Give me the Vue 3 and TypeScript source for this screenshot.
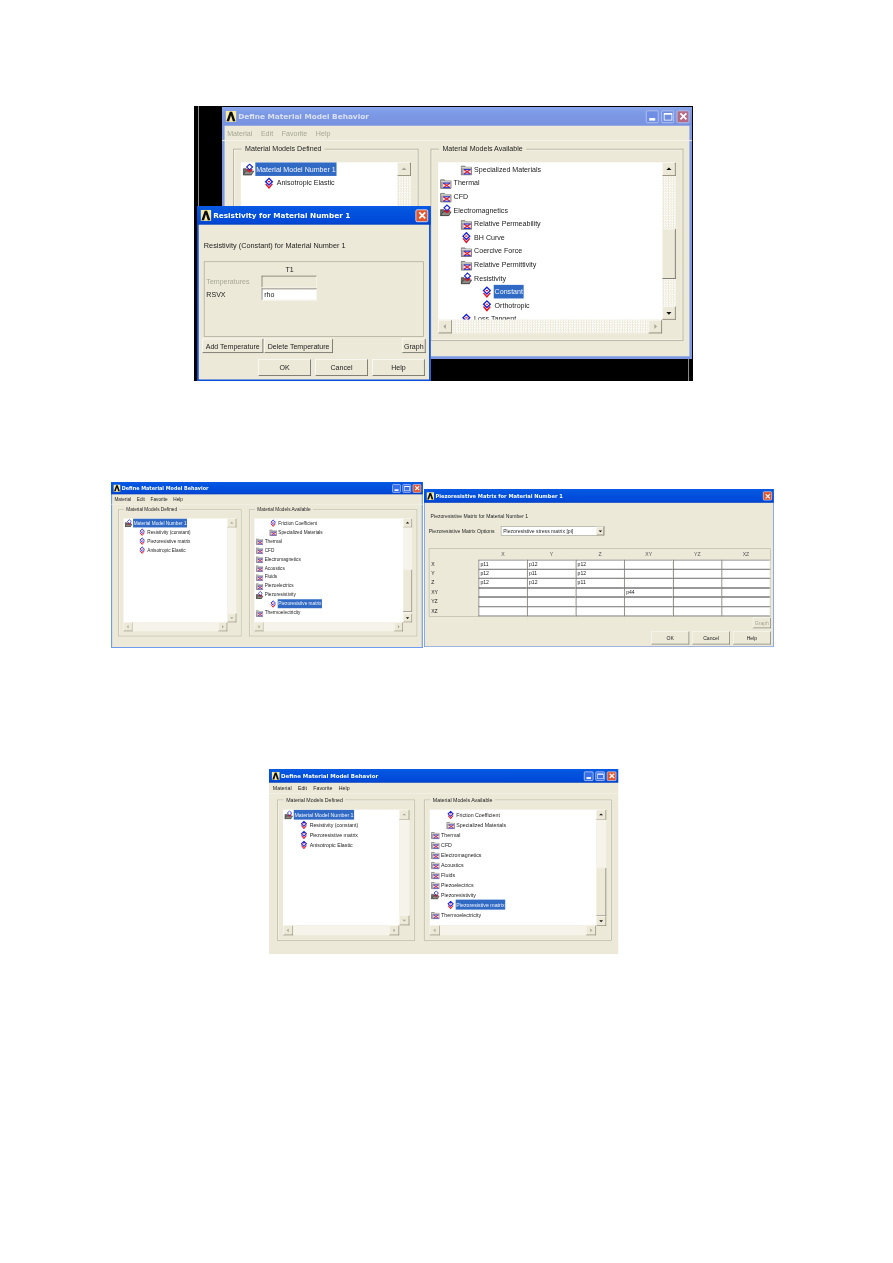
<template>
  <div class="page">
    <!-- shared icons -->
    <svg class="defs" width="0" height="0" aria-hidden="true">
      <symbol id="ico-leaf" viewBox="0 0 16 16">
        <path d="M8 1.500 12.500 6 8 10.500 3.500 6Z" fill="#fff" stroke="#1620d8" stroke-width="1.800" />
        <path d="M3.500 9 8 14.500 12.500 9" fill="none" stroke="#e81020" stroke-width="1.900" />
        <path d="M6.500 6h3" stroke="#e81020" stroke-width="1.500" />
      </symbol>
      <symbol id="ico-folder" viewBox="0 0 16 16">
        <path d="M1 3.500h5l1 1.500h8v10H1Z" fill="#a6a6a2" stroke="#66665f" />
        <path d="M1.500 5.500h13" stroke="#f4f4f0" />
        <rect x="4" y="7.500" width="10" height="7" fill="#dfe3f6" />
        <path d="M4.500 8l9 6M13.500 8l-9 6" stroke="#e81c28" stroke-width="1.500" />
        <path d="M4.500 8h9M4.500 14h9" stroke="#1c2ad0" stroke-width="1.300" />
      </symbol>
      <symbol id="ico-open" viewBox="0 0 16 16">
        <path d="M1 7h4l1 1h6v7H1Z" fill="#6e6e6a" stroke="#3c3c3a" />
        <path d="M1 15l3-5h11l-3 5Z" fill="#8a8a86" stroke="#3c3c3a" />
        <path d="M9.500 .8 13.500 4.600 9.500 8.400 5.500 4.600Z" fill="#fff" stroke="#1620d8" stroke-width="1.500" />
        <path d="M6 7.500 9.500 11 13 7.500" fill="none" stroke="#e81020" stroke-width="1.700" />
      </symbol>
      <symbol id="ico-logo" viewBox="0 0 16 16">
        <rect width="16" height="16" fill="#f6e9a0" />
        <path d="M1.500 15 6.300 1.500h3.400L14.500 15h-3.800L8 6.500 5.300 15Z" fill="#0b0b0b" />
      </symbol>
    </svg>

    <!-- black desktop behind the first screenshot -->
    <div class="desk"><i class="desk-line left" /><i class="desk-line right" /></div>

    <!-- Define Material Model Behavior windows -->
    <section
      v-for="w in windows"
      :key="w.id"
      class="win"
      :class="{ inactive: !w.active, framed: w.framed }"
      :style="placeStyle(w)"
    >
      <header class="title">
        <svg class="logo"><use href="#ico-logo" /></svg>
        <span class="title-text">Define Material Model Behavior</span>
        <span class="caps">
          <b class="cap"><i class="cap-min" /></b>
          <b class="cap"><i class="cap-max" /></b>
          <b class="cap close"><svg viewBox="0 0 10 10"><path d="M1.500 1.500l7 7M8.500 1.500l-7 7" /></svg></b>
        </span>
      </header>
      <nav class="menu">
        <span v-for="m in menu" :key="m">{{ m }}</span>
      </nav>
      <div class="panes">
        <div v-for="p in w.panes" :key="p.legend" class="group" :class="p.cls">
          <span class="legend">{{ p.legend }}</span>
          <div class="tree-box" :class="{ dither: w.dither }">
            <div class="tree">
              <div v-for="r in p.rows" :key="r.text" class="row" :style="{ paddingLeft: r.level * 24 + 2 + 'px' }">
                <svg class="ico"><use :href="'#ico-' + r.icon" /></svg>
                <span class="label" :class="{ sel: r.sel }">{{ r.text }}</span>
              </div>
            </div>
            <div class="vbar">
              <span class="sbtn"><i class="arrow up" :class="{ on: p.thumb }" /></span>
              <div class="track">
                <div v-if="p.thumb" class="thumb" :style="{ marginTop: p.thumb[0] + 'px', height: p.thumb[1] + 'px' }" />
              </div>
              <span class="sbtn"><i class="arrow down" :class="{ on: p.thumb }" /></span>
            </div>
            <div class="hbar">
              <span class="sbtn"><i class="arrow lft" /></span>
              <div class="track" />
              <span class="sbtn"><i class="arrow rgt" /></span>
            </div>
          </div>
        </div>
      </div>
    </section>

    <!-- Resistivity dialog -->
    <section class="dlg res" :style="placeStyle(resPlace)">
      <header class="title">
        <svg class="logo"><use href="#ico-logo" /></svg>
        <span class="title-text">Resistivity for Material Number 1</span>
        <span class="caps"><b class="cap close"><svg viewBox="0 0 10 10"><path d="M1.500 1.500l7 7M8.500 1.500l-7 7" /></svg></b></span>
      </header>
      <p class="res-head">Resistivity (Constant) for Material Number 1</p>
      <div class="res-box">
        <div class="res-col">T1</div>
        <div class="res-line">
          <span class="res-name dis">Temperatures</span>
          <span class="cell dis-cell" />
        </div>
        <div class="res-line">
          <span class="res-name">RSVX</span>
          <span class="cell">rho</span>
        </div>
      </div>
      <div class="res-tools">
        <button class="btn add">Add Temperature</button>
        <button class="btn del">Delete Temperature</button>
        <button class="btn graph">Graph</button>
      </div>
      <div class="foot">
        <button v-for="b in footer" :key="b" class="btn big">{{ b }}</button>
      </div>
    </section>

    <!-- Piezoresistive dialog -->
    <section class="dlg piezo" :style="placeStyle(piezoPlace)">
      <header class="title">
        <svg class="logo"><use href="#ico-logo" /></svg>
        <span class="title-text">Piezoresistive Matrix for Material Number 1</span>
        <span class="caps"><b class="cap close"><svg viewBox="0 0 10 10"><path d="M1.500 1.500l7 7M8.500 1.500l-7 7" /></svg></b></span>
      </header>
      <p class="pz-head">Piezoresistive Matrix for Material Number 1</p>
      <div class="pz-opts">
        <span>Piezoresistive Matrix Options</span>
        <div class="combo">
          <span>Piezoresistive stress matrix [pi]</span>
          <span class="sbtn"><i class="arrow down on" /></span>
        </div>
      </div>
      <div class="pz-grid">
        <span class="pz-h" />
        <span v-for="c in axes" :key="c" class="pz-h">{{ c }}</span>
        <template v-for="(row, i) in matrix" :key="axes[i]">
          <span class="pz-r">{{ axes[i] }}</span>
          <span v-for="(v, j) in row" :key="j" class="cell">{{ v }}</span>
        </template>
      </div>
      <div class="pz-graph"><button class="btn graph off">Graph</button></div>
      <div class="foot">
        <button v-for="b in footer" :key="b" class="btn big">{{ b }}</button>
      </div>
    </section>
  </div>
</template>

<script setup lang="ts">
interface Row {
  text: string
  level: number
  icon: 'leaf' | 'folder' | 'open'
  sel?: boolean
}

interface Pane {
  legend: string
  cls: string
  rows: Row[]
  thumb?: [number, number]
}

interface Place {
  x: number
  y: number
  sx: number
  sy: number
}

const menu = ['Material', 'Edit', 'Favorite', 'Help']
const footer = ['OK', 'Cancel', 'Help']
const axes = ['X', 'Y', 'Z', 'XY', 'YZ', 'XZ']

const matrix = [
  ['p11', 'p12', 'p12', '', '', ''],
  ['p12', 'p11', 'p12', '', '', ''],
  ['p12', 'p12', 'p11', '', '', ''],
  ['', '', '', 'p44', '', ''],
  ['', '', '', '', '', ''],
  ['', '', '', '', '', '']
]

const rootRow: Row = { text: 'Material Model Number 1', level: 0, icon: 'open', sel: true }

const firstRight: Row[] = [
  { text: 'Specialized Materials', level: 1, icon: 'folder' },
  { text: 'Thermal', level: 0, icon: 'folder' },
  { text: 'CFD', level: 0, icon: 'folder' },
  { text: 'Electromagnetics', level: 0, icon: 'open' },
  { text: 'Relative Permeability', level: 1, icon: 'folder' },
  { text: 'BH Curve', level: 1, icon: 'leaf' },
  { text: 'Coercive Force', level: 1, icon: 'folder' },
  { text: 'Relative Permittivity', level: 1, icon: 'folder' },
  { text: 'Resistivity', level: 1, icon: 'open' },
  { text: 'Constant', level: 2, icon: 'leaf', sel: true },
  { text: 'Orthotropic', level: 2, icon: 'leaf' },
  { text: 'Loss Tangent', level: 1, icon: 'leaf' }
]

const piezoLeft: Row[] = [
  rootRow,
  { text: 'Resistivity (constant)', level: 1, icon: 'leaf' },
  { text: 'Piezoresistive matrix', level: 1, icon: 'leaf' },
  { text: 'Anisotropic Elastic', level: 1, icon: 'leaf' }
]

const piezoRight: Row[] = [
  { text: 'Friction Coefficient', level: 1, icon: 'leaf' },
  { text: 'Specialized Materials', level: 1, icon: 'folder' },
  { text: 'Thermal', level: 0, icon: 'folder' },
  { text: 'CFD', level: 0, icon: 'folder' },
  { text: 'Electromagnetics', level: 0, icon: 'folder' },
  { text: 'Acoustics', level: 0, icon: 'folder' },
  { text: 'Fluids', level: 0, icon: 'folder' },
  { text: 'Piezoelectrics', level: 0, icon: 'folder' },
  { text: 'Piezoresistivity', level: 0, icon: 'open' },
  { text: 'Piezoresistive matrix', level: 1, icon: 'leaf', sel: true },
  { text: 'Thermoelectricity', level: 0, icon: 'folder' }
]

const leftLegend = 'Material Models Defined'
const rightLegend = 'Material Models Available'

const windows = [
  {
    id: 'first', x: 222, y: 107, sx: 0.8545, sy: 0.851, active: false, dither: true, framed: true,
    panes: [
      { legend: leftLegend, cls: 'left', rows: [rootRow, { text: 'Anisotropic Elastic', level: 1, icon: 'leaf' }] },
      { legend: rightLegend, cls: 'right', rows: firstRight, thumb: [62, 59] }
    ] as Pane[]
  },
  {
    id: 'second', x: 111, y: 482, sx: 0.567, sy: 0.561, active: true, dither: false, framed: true,
    panes: [
      { legend: leftLegend, cls: 'left', rows: piezoLeft },
      { legend: rightLegend, cls: 'right', rows: piezoRight, thumb: [75, 75] }
    ] as Pane[]
  },
  {
    id: 'third', x: 269, y: 769, sx: 0.635, sy: 0.625, active: true, dither: false, framed: false,
    panes: [
      { legend: leftLegend, cls: 'left', rows: piezoLeft },
      { legend: rightLegend, cls: 'right', rows: piezoRight, thumb: [77, 77] }
    ] as Pane[]
  }
]

const resPlace: Place = { x: 197, y: 206, sx: 0.85, sy: 0.85 }
const piezoPlace: Place = { x: 424, y: 489, sx: 0.6, sy: 0.6 }

function placeStyle(p: Place) {
  return {
    left: p.x + 'px',
    top: p.y + 'px',
    transform: `scale(${p.sx}, ${p.sy})`
  }
}
</script>

<style>
html,
body {
  margin: 0;
  background: #fff;
}
</style>

<style scoped>
.page {
  position: relative;
  width: 893px;
  height: 1263px;
  overflow: hidden;
  font-family: "Liberation Sans", Arial, sans-serif;
  font-size: 8.300px;
  color: #222;
}

.defs {
  position: absolute;
}

.desk {
  position: absolute;
  left: 194px;
  top: 106px;
  width: 499px;
  height: 275px;
  background: #000;
}

.desk-line {
  position: absolute;
  width: 1px;
  background: #8a8a8a;
}

.desk-line.left {
  left: 4px;
  top: 0;
  height: 100px;
}

.desk-line.right {
  right: 4px;
  top: 250px;
  height: 25px;
}

/* windows are drawn at a common size then scaled to each screenshot */
.win,
.dlg {
  position: absolute;
  box-sizing: border-box;
  transform-origin: 0 0;
  background: #ece9d8;
  display: flex;
  flex-direction: column;
  filter: blur(0.3px);
}

.win {
  width: 550px;
  height: 296px;
}

.win.framed {
  box-shadow: inset 2px 0 0 #6f9af0, inset -2px 0 0 #6f9af0, inset 0 -2px 0 #6f9af0;
}

.win.inactive {
  box-shadow: inset 3px 0 0 #7d98e3, inset -3px 0 0 #7d98e3, inset 0 -3px 0 #7d98e3;
}

.title {
  flex: none;
  height: 22px;
  display: flex;
  align-items: center;
  gap: 2px;
  padding: 0 3px 0 4px;
  color: #fff;
  background: linear-gradient(#0a5ae6 0, #0355e0 20%, #0049d8 85%, #0340c0 100%);
}

.inactive .title {
  color: #d9e0f3;
  background: linear-gradient(#8aa6ec 0, #7d9ae6 30%, #7792e0 100%);
}

.logo {
  flex: none;
  width: 13px;
  height: 14px;
}

.title-text {
  flex: 1;
  font-family: "DejaVu Sans", sans-serif;
  font-weight: 700;
  font-size: 8.600px;
  white-space: nowrap;
}

.caps {
  display: flex;
  gap: 3px;
}

.cap {
  box-sizing: border-box;
  width: 15px;
  height: 15px;
  display: flex;
  align-items: center;
  justify-content: center;
  border: 1px solid #dfe8fb;
  border-radius: 2px;
  background: #3a6ee8;
}

.inactive .cap {
  background: #6f8de2;
  border-color: #b8c8f0;
}

.cap.close {
  background: #e2552d;
}

.inactive .cap.close {
  background: #b56b85;
}

.cap svg {
  width: 10px;
  height: 10px;
  fill: none;
  stroke: #fff;
  stroke-width: 2;
}

.cap-min {
  width: 7px;
  height: 3px;
  margin-top: 6px;
  background: #fff;
}

.cap-max {
  box-sizing: border-box;
  width: 10px;
  height: 9px;
  border: 1px solid #fff;
  border-top-width: 2px;
}

.menu {
  flex: none;
  height: 18px;
  display: flex;
  align-items: center;
  gap: 10px;
  padding-left: 6px;
  border-bottom: 1px solid #f6f4ea;
  box-sizing: border-box;
}

.inactive .menu {
  color: #a8a694;
}

.panes {
  display: flex;
  gap: 14px;
  padding: 9px 0 0 13px;
}

.group {
  position: relative;
  box-sizing: border-box;
  height: 226px;
  padding: 15px 8px 8px;
  border: 1px solid #b5b2a2;
  box-shadow: inset 0 0 0 1px #f6f4ea;
}

.group.left {
  width: 217px;
}

.group.right {
  width: 296px;
}

.legend {
  position: absolute;
  left: 9px;
  top: -6px;
  padding: 0 4px;
  background: #ece9d8;
  line-height: 11px;
  white-space: nowrap;
}

.tree-box {
  display: grid;
  grid-template-columns: 1fr 16px;
  grid-template-rows: 1fr 16px;
  height: 100%;
}

.tree {
  background: #fff;
  overflow: hidden;
  min-width: 0;
  min-height: 0;
}

.row {
  height: 16px;
  display: flex;
  align-items: center;
  gap: 1px;
  white-space: nowrap;
}

.ico {
  flex: none;
  width: 14px;
  height: 15px;
}

.label {
  line-height: 16px;
  padding: 0 1px;
}

.label.sel {
  background: #316ac5;
  color: #f2f5fb;
}

.vbar {
  display: flex;
  flex-direction: column;
  min-height: 0;
}

.hbar {
  display: flex;
}

.track {
  flex: 1;
  background: #f5f3ea;
}

.dither .track {
  background: repeating-conic-gradient(#ece9d8 0 25%, #fff 0 50%) 0 0 / 3px 3px;
}

.thumb {
  box-sizing: border-box;
  background: #ece9d8;
  border: 1px solid;
  border-color: #f6f4ea #6f6d62 #6f6d62 #f6f4ea;
}

.sbtn {
  flex: none;
  box-sizing: border-box;
  width: 16px;
  height: 16px;
  display: flex;
  align-items: center;
  justify-content: center;
  background: #ece9d8;
  border: 1px solid;
  border-color: #fbfaf4 #85836f #85836f #fbfaf4;
}

.arrow {
  width: 0;
  height: 0;
  border: 3.500px solid transparent;
  --arrow: #a8a694;
}

.arrow.on {
  --arrow: #111;
}

.arrow.up {
  border-bottom-color: var(--arrow);
  margin-top: -4px;
}

.arrow.down {
  border-top-color: var(--arrow);
  margin-top: 4px;
}

.arrow.lft {
  border-right-color: var(--arrow);
  margin-left: -4px;
}

.arrow.rgt {
  border-left-color: var(--arrow);
  margin-left: 4px;
}

.dlg {
  box-shadow: inset 2px 0 0 #0a4fd8, inset -2px 0 0 #0a4fd8, inset 0 -2px 0 #0a4fd8;
}

.btn {
  box-sizing: border-box;
  margin: 0;
  padding: 0;
  font: inherit;
  color: #222;
  white-space: nowrap;
  background: #ece9d8;
  border: 1px solid;
  border-color: #fbfaf4 #716f64 #716f64 #fbfaf4;
}

.cell {
  box-sizing: border-box;
  display: block;
  background: #fff;
  border: 1px solid;
  border-color: #807e70 #f6f4ea #f6f4ea #807e70;
  padding-left: 2px;
  overflow: hidden;
  white-space: nowrap;
}

.foot {
  display: flex;
  justify-content: flex-end;
  gap: 5px;
}

/* resistivity */
.res {
  width: 275px;
  height: 206px;
}

.res-head {
  margin: 17px 0 0 8px;
  height: 14px;
  line-height: 14px;
  font-size: 8.600px;
}

.res-box {
  box-sizing: border-box;
  margin: 12px 0 0 8px;
  width: 259px;
  height: 89px;
  padding: 3px 0 0 2px;
  border: 1px solid #b5b2a2;
}

.res-col {
  width: 196px;
  height: 13px;
  line-height: 13px;
  text-align: center;
}

.res-line {
  display: flex;
  height: 15px;
}

.res-name {
  width: 65px;
  line-height: 15px;
}

.res-name.dis {
  color: #a8a694;
}

.res .cell {
  width: 65px;
  height: 14px;
  line-height: 12px;
}

.dis-cell {
  background: #ece9d8;
}

.res-tools {
  display: flex;
  gap: 1px;
  height: 17px;
  margin: 2px 0 0 6px;
}

.res-tools .add {
  width: 72px;
}

.res-tools .del {
  width: 81px;
}

.res-tools .graph {
  width: 28px;
  margin-left: auto;
  margin-right: 6px;
}

.res .foot {
  margin: 7px 7px 0 0;
}

.res .btn.big {
  width: 62px;
  height: 20px;
}

/* piezoresistive matrix */
.piezo {
  width: 583px;
  height: 263px;
  font-size: 8.500px;
  box-shadow: inset 1px 0 0 #4f7fe8, inset -1px 0 0 #4f7fe8, inset 0 -1px 0 #4f7fe8;
}

.piezo .title {
  height: 23px;
}

.pz-head {
  margin: 17px 0 0 11px;
  height: 11px;
  line-height: 11px;
}

.pz-opts {
  display: flex;
  align-items: center;
  gap: 6px;
  margin: 10px 0 0 8px;
  height: 18px;
}

.pz-opts > span {
  width: 114px;
  white-space: nowrap;
}

.combo {
  box-sizing: border-box;
  width: 173px;
  height: 16px;
  display: flex;
  align-items: center;
  justify-content: space-between;
  background: #fff;
  border: 1px solid #9a9888;
  padding-left: 3px;
}

.combo .sbtn {
  width: 13px;
  height: 14px;
}

.pz-grid {
  box-sizing: border-box;
  display: grid;
  grid-template-columns: 82px repeat(6, 81px);
  grid-template-rows: 18px repeat(6, 15.600px);
  width: 570px;
  height: 114px;
  margin: 20px 0 0 8px;
  border: 1px solid #b5b2a2;
}

.pz-h {
  text-align: center;
  line-height: 18px;
  color: #555;
}

.pz-r {
  padding-left: 3px;
  line-height: 15px;
}

.pz-grid .cell {
  height: 15.600px;
  line-height: 13px;
  border-color: #555 #ece9d8 #555 #555;
}

.pz-graph {
  display: flex;
  justify-content: flex-end;
  margin: 1px 5px 0 0;
}

.pz-graph .graph {
  width: 30px;
  height: 18px;
}

.btn.off {
  color: #a8a694;
}

.piezo .foot {
  margin: 5px 5px 0 0;
}

.piezo .btn.big {
  width: 63px;
  height: 22px;
}
</style>
